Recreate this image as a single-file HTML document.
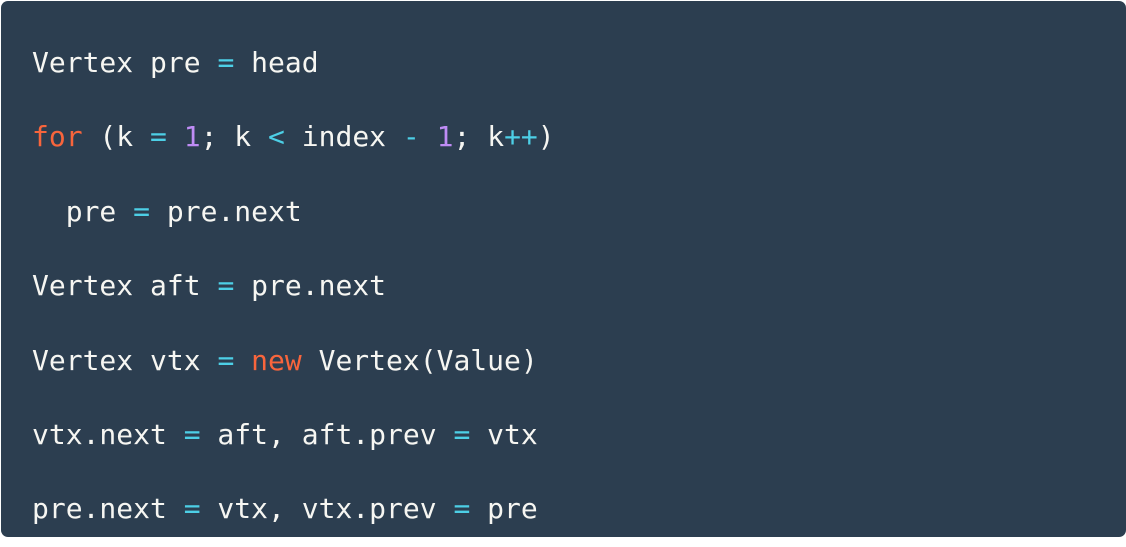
<!DOCTYPE html>
<html><head><style>
html,body{margin:0;padding:0;background:#fff;width:1126px;height:538px;overflow:hidden}
.box{position:absolute;left:1px;top:1px;width:1125px;height:536px;background:#2c3e50;border-radius:7px}
pre{position:absolute;left:32px;top:26px;margin:0;font-family:"DejaVu Sans Mono","Liberation Mono",monospace;font-size:28px;line-height:74.4px;color:#f6f6f2}
.o{color:#f8653c}.c{color:#4dcfe6}.p{color:#bf8cf5}
</style></head><body><div class="box"></div>
<pre>Vertex pre <span class="c">=</span> head
<span class="o">for</span> (k <span class="c">=</span> <span class="p">1</span>; k <span class="c">&lt;</span> index <span class="c">-</span> <span class="p">1</span>; k<span class="c">++</span>)
  pre <span class="c">=</span> pre.next
Vertex aft <span class="c">=</span> pre.next
Vertex vtx <span class="c">=</span> <span class="o">new</span> Vertex(Value)
vtx.next <span class="c">=</span> aft, aft.prev <span class="c">=</span> vtx
pre.next <span class="c">=</span> vtx, vtx.prev <span class="c">=</span> pre</pre>
</body></html>
